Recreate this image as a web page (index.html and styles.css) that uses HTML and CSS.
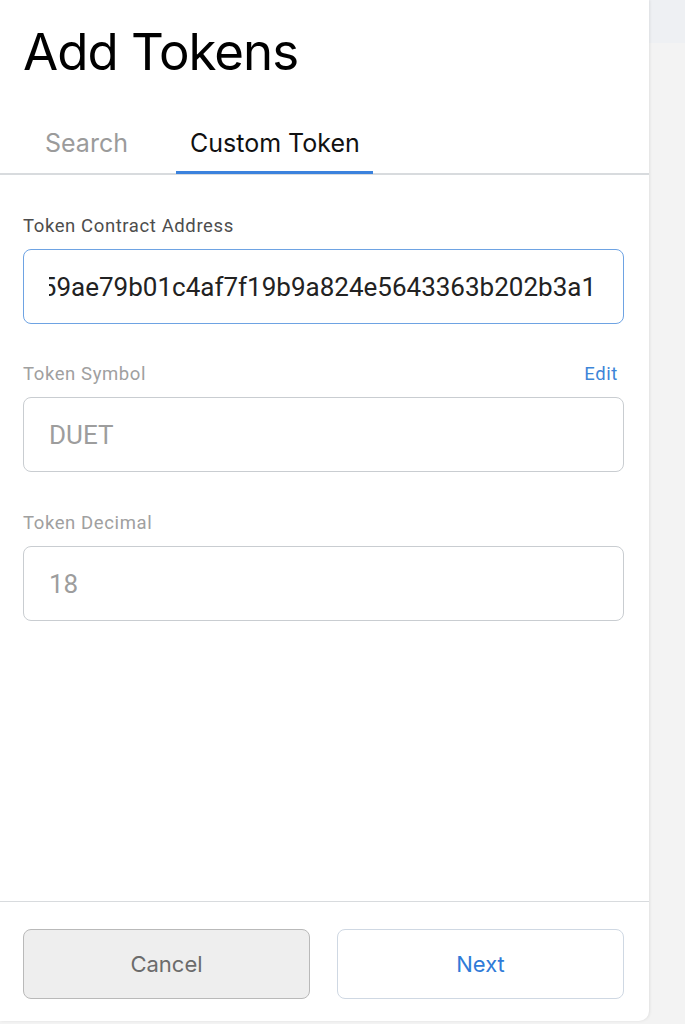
FILE: index.html
```html
<!DOCTYPE html>
<html lang="en">
<head>
<meta charset="utf-8">
<title>Add Tokens</title>
<link rel="stylesheet" href="styles.css">
</head>
<body>
<div class="page">
  <div class="panel">
    <h1 class="title">Add Tokens</h1>
    <div class="tabs">
      <div class="tab">Search</div>
      <div class="tab tab-active">Custom Token</div>
    </div>
    <div class="form">
      <div class="field">
        <div class="label-row"><span class="label label-dark">Token Contract Address</span></div>
        <div class="input input-focus"><div class="input-clip"><span class="input-value">0x659ae79b01c4af7f19b9a824e5643363b202b3a1</span></div></div>
      </div>
      <div class="field">
        <div class="label-row"><span class="label">Token Symbol</span><span class="edit">Edit</span></div>
        <div class="input"><div class="input-clip input-left"><span class="input-value muted">DUET</span></div></div>
      </div>
      <div class="field field-last">
        <div class="label-row"><span class="label">Token Decimal</span></div>
        <div class="input"><div class="input-clip input-left"><span class="input-value muted">18</span></div></div>
      </div>
    </div>
    <div class="footer">
      <button class="btn btn-cancel">Cancel</button>
      <button class="btn btn-next">Next</button>
    </div>
  </div>
  <div class="side">
    <div class="side-top"></div>
  </div>
</div>
</body>
</html>
```

FILE: styles.css
```css
* { box-sizing: border-box; }
html, body { margin: 0; padding: 0; }
body {
  background: #f3f3f3;
  font-family: "Roboto", "Liberation Sans", sans-serif;
  width: 685px;
  height: 1024px;
  overflow: hidden;
}
.page {
  display: flex;
  height: 1024px;
}
.panel {
  width: 649px;
  height: 1021px;
  background: #ffffff;
  border-bottom-right-radius: 10px;
  box-shadow: 1px 0 3px rgba(0, 0, 0, 0.08);
  display: flex;
  flex-direction: column;
  position: relative;
  z-index: 1;
}
.side {
  flex: 1;
}
.side-top {
  height: 43px;
  background: #eef0f3;
}
.title {
  margin: 0;
  padding: 22px 0 0 23px;
  font-family: "Inter", "Open Sans", sans-serif;
  font-weight: 400;
  font-size: 51px;
  line-height: 60px;
  color: #000;
  letter-spacing: -1px;
}
.tabs {
  display: flex;
  margin-top: 45px;
  padding-left: 31px;
  gap: 35px;
  border-bottom: 2px solid #d8dbde;
}
.tab {
  font-family: "Inter", "Open Sans", sans-serif;
  font-size: 25px;
  line-height: 32px;
  padding: 0 13px 12px 14px;
  color: #9b9b9b;
  border-bottom: 3px solid transparent;
  margin-bottom: -1px;
}
.tab-active {
  color: #111;
  border-bottom-color: #3b82dd;
}
.form {
  flex: 1;
  padding: 39px 25px 0 23px;
  display: flex;
  flex-direction: column;
  gap: 38px;
}
.field-last { margin-top: 1px; }
.label-row {
  display: flex;
  justify-content: space-between;
  align-items: baseline;
  margin-bottom: 11px;
  line-height: 24px;
}
.label {
  font-size: 18.5px;
  letter-spacing: 0.6px;
  color: #a0a0a0;
}
.label-dark { color: #4d4d4d; }
.edit {
  font-size: 18.5px;
  letter-spacing: 0.6px;
  color: #3d85d8;
  margin-right: 6px;
}
.input {
  height: 75px;
  border: 1px solid #c9cdd1;
  border-radius: 8px;
  padding: 0 27px 0 25px;
  display: flex;
  align-items: center;
}
.input-focus { border-color: #6ea3e3; }
.input-clip {
  flex: 1;
  overflow: hidden;
  display: flex;
  justify-content: flex-end;
  white-space: nowrap;
}
.input-left { justify-content: flex-start; }
.input-value {
  font-size: 26px;
  line-height: 32px;
  color: #222;
  flex-shrink: 0;
}
.muted { color: #9d9d9d; }
.footer {
  border-top: 1px solid #d8dbde;
  padding: 27px 25px 22px 23px;
  display: flex;
  gap: 27px;
}
.btn {
  flex: 1;
  height: 70px;
  border-radius: 8px;
  font-family: "Inter", "Open Sans", sans-serif;
  font-size: 22px;
  cursor: pointer;
}
.btn-cancel {
  background: #eeeeee;
  border: 1px solid #b9b9b9;
  color: #6b6b6b;
}
.btn-next {
  background: #ffffff;
  border: 1px solid #cfd8e3;
  color: #2f7bd8;
}
```
